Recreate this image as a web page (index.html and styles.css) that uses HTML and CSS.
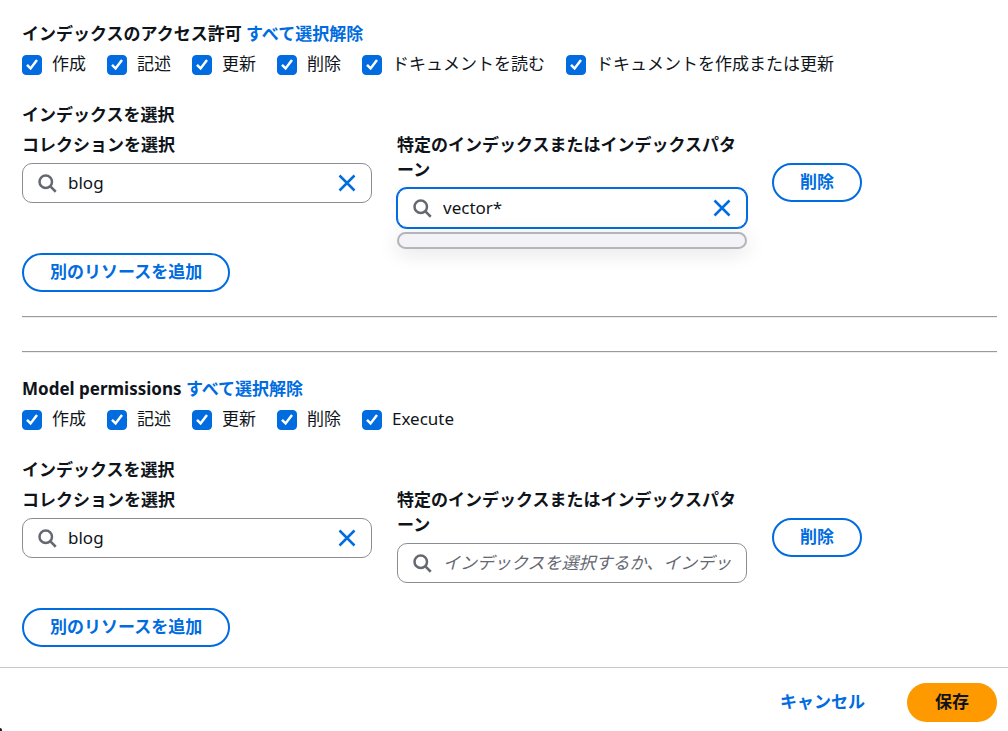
FILE: index.html
```html
<!DOCTYPE html>
<html lang="ja">
<head>
<meta charset="utf-8">
<meta name="viewport" content="width=device-width, initial-scale=1">
<title>アクセス許可</title>
<link rel="stylesheet" href="styles.css">
</head>
<body>
<svg class="sprite" aria-hidden="true">
  <symbol id="check" viewBox="0 0 20 20"><path d="M5 9.8 8.6 13.4 15 5"/></symbol>
  <symbol id="search" viewBox="0 0 16 16"><circle cx="7" cy="7" r="5"/><path d="m15 15-4.5-4.5"/></symbol>
  <symbol id="close" viewBox="0 0 16 16"><path d="m2 2 12 12M14 2 2 14"/></symbol>
</svg>
<main class="content">
  <section class="permissions">
    <h2 class="heading">インデックスのアクセス許可 <a href="#" class="link">すべて選択解除</a></h2>
    <div class="checks">
      <label class="check"><span class="box"><input type="checkbox" checked><svg><use href="#check"/></svg></span>作成</label>
      <label class="check"><span class="box"><input type="checkbox" checked><svg><use href="#check"/></svg></span>記述</label>
      <label class="check"><span class="box"><input type="checkbox" checked><svg><use href="#check"/></svg></span>更新</label>
      <label class="check"><span class="box"><input type="checkbox" checked><svg><use href="#check"/></svg></span>削除</label>
      <label class="check"><span class="box"><input type="checkbox" checked><svg><use href="#check"/></svg></span>ドキュメントを読む</label>
      <label class="check"><span class="box"><input type="checkbox" checked><svg><use href="#check"/></svg></span>ドキュメントを作成または更新</label>
    </div>
    <h3 class="heading subheading">インデックスを選択</h3>
    <div class="resource">
      <div class="field">
        <label for="collection-1">コレクションを選択</label>
        <div class="search">
          <svg class="icon"><use href="#search"/></svg>
          <input id="collection-1" type="text" value="blog">
          <button type="button" class="clear" aria-label="クリア"><svg class="icon"><use href="#close"/></svg></button>
        </div>
      </div>
      <div class="field">
        <label for="index-1">特定のインデックスまたはインデックスパターン</label>
        <div class="search search-active">
          <svg class="icon"><use href="#search"/></svg>
          <input id="index-1" type="text" value="vector*">
          <button type="button" class="clear" aria-label="クリア"><svg class="icon"><use href="#close"/></svg></button>
          <div class="dropdown"></div>
        </div>
      </div>
      <div class="action"><button type="button" class="button">削除</button></div>
    </div>
    <button type="button" class="button">別のリソースを追加</button>
  </section>
  <hr class="rule">
  <hr class="rule">
  <section class="permissions">
    <h2 class="heading">Model permissions <a href="#" class="link">すべて選択解除</a></h2>
    <div class="checks">
      <label class="check"><span class="box"><input type="checkbox" checked><svg><use href="#check"/></svg></span>作成</label>
      <label class="check"><span class="box"><input type="checkbox" checked><svg><use href="#check"/></svg></span>記述</label>
      <label class="check"><span class="box"><input type="checkbox" checked><svg><use href="#check"/></svg></span>更新</label>
      <label class="check"><span class="box"><input type="checkbox" checked><svg><use href="#check"/></svg></span>削除</label>
      <label class="check"><span class="box"><input type="checkbox" checked><svg><use href="#check"/></svg></span>Execute</label>
    </div>
    <h3 class="heading subheading">インデックスを選択</h3>
    <div class="resource">
      <div class="field">
        <label for="collection-2">コレクションを選択</label>
        <div class="search">
          <svg class="icon"><use href="#search"/></svg>
          <input id="collection-2" type="text" value="blog">
          <button type="button" class="clear" aria-label="クリア"><svg class="icon"><use href="#close"/></svg></button>
        </div>
      </div>
      <div class="field">
        <label for="index-2">特定のインデックスまたはインデックスパターン</label>
        <div class="search">
          <svg class="icon"><use href="#search"/></svg>
          <input id="index-2" type="text" placeholder="インデックスを選択するか、インデックスパターンを入力">
        </div>
      </div>
      <div class="action"><button type="button" class="button">削除</button></div>
    </div>
    <button type="button" class="button">別のリソースを追加</button>
  </section>
</main>
<footer class="footer">
  <button type="button" class="button button-link">キャンセル</button>
  <button type="button" class="button button-primary">保存</button>
  <span class="corner"></span>
</footer>
</body>
</html>
```
FILE: styles.css
```css
:root {
  --blue: #006ce0;
  --text: #0f141a;
  --muted: #656871;
  --font: "Noto Sans", "Noto Sans CJK JP", sans-serif;
}

* { box-sizing: border-box; }

body {
  display: flex;
  flex-direction: column;
  min-height: 100vh;
  margin: 0;
  background: #fff;
  color: var(--text);
  font: 17px/25px var(--font);
}

input, button { font: inherit; }

.sprite { position: absolute; width: 0; height: 0; }

.content { flex: 1; padding: 21px 11px 20px 22px; }

.heading { margin: 0; font-size: 17px; line-height: 25px; font-weight: 700; }
.subheading { margin: 26px 0 5px; }
.link { color: var(--blue); text-decoration: none; }

.checks { display: flex; flex-wrap: wrap; gap: 21px; margin-top: 5px; }
.check { display: flex; align-items: center; gap: 10px; }
.box { display: grid; margin-top: 2px; }
.box input, .box svg { grid-area: 1 / 1; width: 20px; height: 20px; margin: 0; }
.box input {
  appearance: none;
  border: 1px solid #8c8c94;
  border-radius: 4px;
}
.box input:checked { border-color: var(--blue); background: var(--blue); }
.box svg { fill: none; stroke: #fff; stroke-width: 2.5; pointer-events: none; }

.resource {
  display: grid;
  grid-template-columns: 14fr 14fr 9fr;
  gap: 25px;
  margin-bottom: 25px;
}
.field { min-width: 0; }
.field label { display: block; font-weight: 700; line-break: anywhere; }
.action { padding-top: 31px; }

.search {
  position: relative;
  display: flex;
  align-items: center;
  gap: 11px;
  height: 40px;
  margin-top: 6px;
  padding: 0 14px;
  border: 1px solid #8c8c94;
  border-radius: 10px;
  background: #fff;
}
.search-active { border-color: var(--blue); box-shadow: 0 0 0 1px var(--blue); }
.search input {
  flex: 1;
  min-width: 0;
  padding: 0 0 2px;
  border: 0;
  outline: 0;
  background: none;
  color: var(--text);
}
.search input::placeholder { color: var(--muted); font-style: italic; opacity: 1; }

.icon { display: block; flex: none; width: 20px; height: 20px; fill: none; stroke: var(--muted); stroke-width: 2; }
.clear { padding: 0; border: 0; background: none; }
.clear .icon { stroke: var(--blue); }

.dropdown {
  position: absolute;
  top: calc(100% + 5px);
  left: -1px;
  right: -1px;
  height: 17px;
  border: 2px solid #b4b4bb;
  border-radius: 10px;
  background: #f3f3f7;
  box-shadow: 0 4px 20px 1px rgba(0, 7, 22, 0.1);
}

.button {
  display: inline-block;
  height: 39px;
  padding: 0 26px 2px;
  border: 2px solid var(--blue);
  border-radius: 20px;
  background: #fff;
  color: var(--blue);
  font-weight: 700;
  line-height: 25px;
  vertical-align: top;
}
.button-link { border-color: transparent; }
.button-primary { border-color: #f90; background: #f90; color: var(--text); }

.rule { height: 2px; margin: 24px 0 0; border: 0; border-top: 1px solid #9a9a9a; background: #eee; }
.rule + .rule { margin: 33px 0 23px; }

.footer {
  position: relative;
  display: flex;
  justify-content: flex-end;
  gap: 14px;
  padding: 15px 11px 9px;
  border-top: 1px solid #c6c6cd;
}
.corner {
  position: absolute;
  left: 0;
  bottom: 0;
  width: 2px;
  height: 3px;
  border-top-right-radius: 2px;
  background: #1b1b2a;
}
```
